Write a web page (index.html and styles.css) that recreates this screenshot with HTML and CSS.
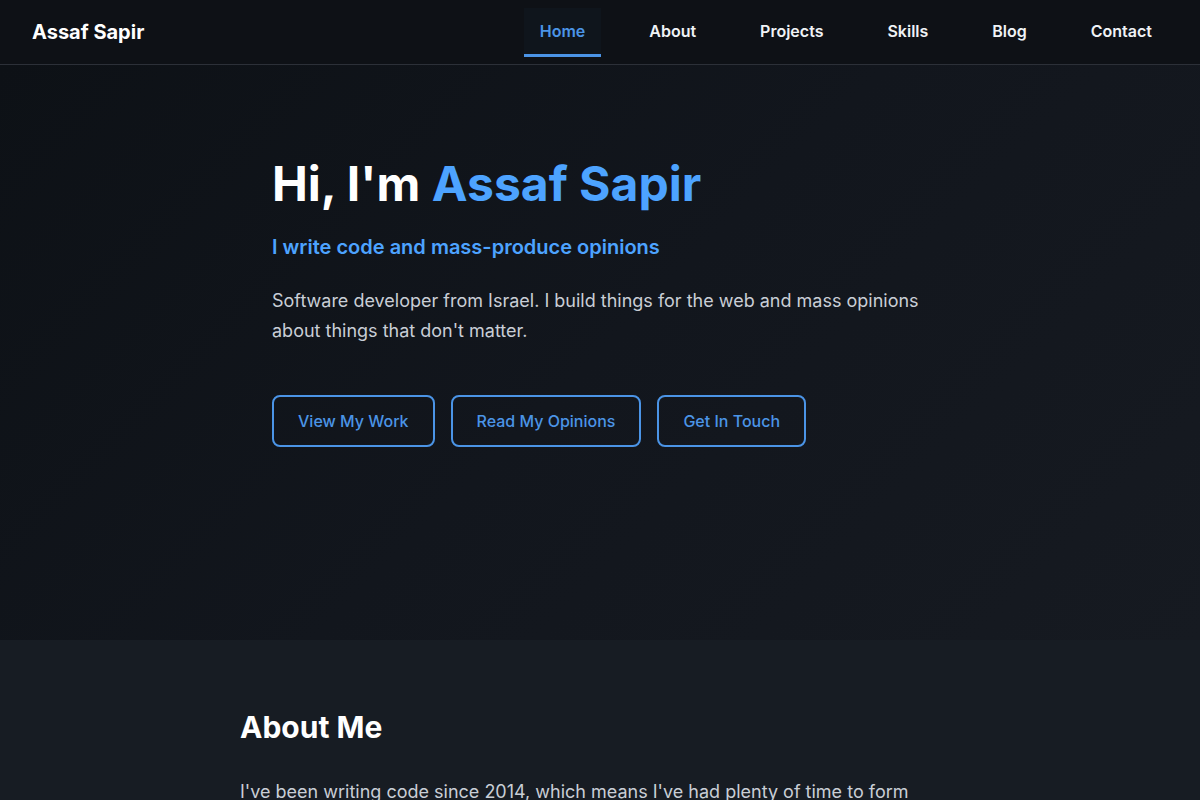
FILE: index.html
```html
<!DOCTYPE html>
<html lang="en">
<head>
    <meta charset="UTF-8">
    <meta name="viewport" content="width=device-width, initial-scale=1.0">
    <title>Assaf Sapir</title>
    <link rel="stylesheet" href="styles.css">
</head>
<body>
    <nav class="navbar">
        <a href="#" class="logo">Assaf Sapir</a>
        <ul class="nav-links">
            <li><a href="#home" class="active">Home</a></li>
            <li><a href="#about">About</a></li>
            <li><a href="#projects">Projects</a></li>
            <li><a href="#skills">Skills</a></li>
            <li><a href="#blog">Blog</a></li>
            <li><a href="#contact">Contact</a></li>
        </ul>
    </nav>

    <!-- Hero -->
    <section class="hero" id="home">
        <div class="hero-content">
            <h1>Hi, I'm <span class="highlight">Assaf Sapir</span></h1>
            <p class="tagline">I write code and mass-produce opinions</p>
            <p class="intro">Software developer from Israel. I build things for the web and mass opinions about things that don't matter.</p>
            <div class="hero-buttons">
                <a href="#projects" class="btn">View My Work</a>
                <a href="#blog" class="btn">Read My Opinions</a>
                <a href="#contact" class="btn">Get In Touch</a>
            </div>
        </div>
    </section>

    <!-- About -->
    <section class="about" id="about">
        <div class="container">
            <h2>About Me</h2>
            <p>I've been writing code since 2014, which means I've had plenty of time to form opinions about tabs, spaces, frameworks and everything in between.</p>
        </div>
    </section>
</body>
</html>
```

FILE: styles.css
```css
* {
    margin: 0;
    padding: 0;
    box-sizing: border-box;
}
body {
    font-family: Inter, "Noto Sans", sans-serif;
    background: #171c23;
    color: #c9d1d9;
}
a {
    text-decoration: none;
}

.navbar {
    height: 65px;
    display: flex;
    align-items: center;
    justify-content: space-between;
    padding: 0 32px;
    background: #0e1116;
    border-bottom: 1px solid #2c3038;
}
.logo {
    color: #fff;
    font-size: 20px;
    font-weight: 700;
}
.nav-links {
    list-style: none;
    display: flex;
    gap: 32px;
}
.nav-links a {
    display: block;
    padding: 14px 16px 13px;
    line-height: 19px;
    color: #f0f3f6;
    font-size: 16px;
    font-weight: 600;
    border-bottom: 3px solid transparent;
}
.nav-links a.active {
    color: #4b94e6;
    border-bottom-color: #4b94e6;
    background: rgba(75, 148, 230, 0.03);
}

.hero {
    height: 575px;
    padding-top: 90px;
    background: linear-gradient(135deg, #0d1116 0%, #12161d 50%, #161a21 100%);
}
.hero-content {
    max-width: 656px;
    margin: 0 auto;
}
.hero h1 {
    font-size: 48px;
    font-weight: 700;
    color: #fff;
    line-height: 1.2;
}
.highlight {
    color: #4da3ff;
}
.tagline {
    margin-top: 22px;
    font-size: 20px;
    font-weight: 600;
    color: #4da3ff;
}
.intro {
    margin-top: 27px;
    font-size: 18px;
    line-height: 1.7;
    color: #c9ced6;
}
.hero-buttons {
    display: flex;
    gap: 16px;
    margin-top: 48px;
}
.btn {
    display: inline-block;
    padding: 14px 24px;
    line-height: 20px;
    border: 2px solid #4b94e6;
    border-radius: 8px;
    color: #4b94e6;
    font-size: 16px;
    font-weight: 500;
}

.about {
    padding: 69px 0 80px;
    background: #171c23;
}
.container {
    max-width: 720px;
    margin: 0 auto;
}
.about h2 {
    font-size: 30px;
    font-weight: 700;
    color: #fff;
}
.about p {
    margin-top: 32px;
    font-size: 18px;
    line-height: 1.7;
    color: #c9ced6;
}
```
